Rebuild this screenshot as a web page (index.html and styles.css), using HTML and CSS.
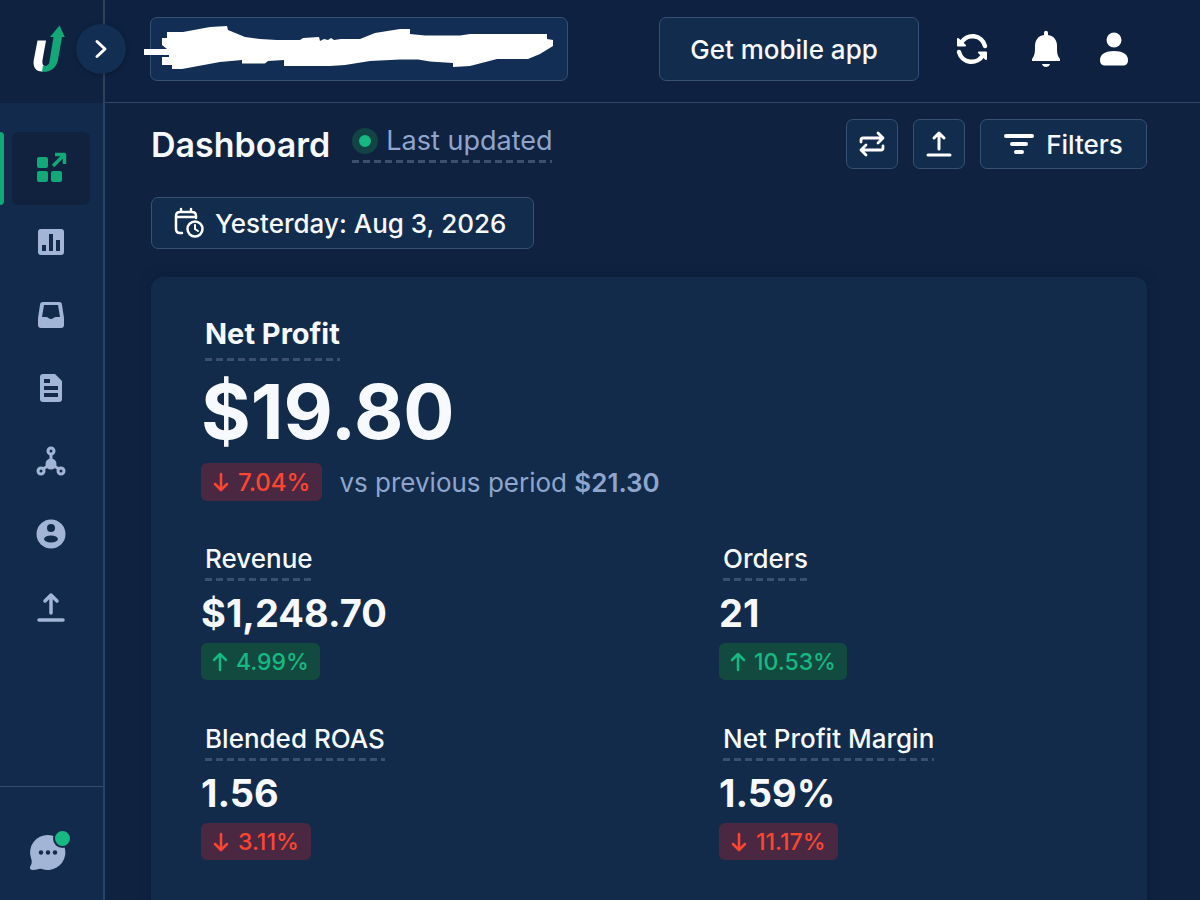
FILE: index.html
```html
<!DOCTYPE html>
<html lang="en">
<head>
    <meta charset="UTF-8">
    <meta name="viewport" content="width=device-width, initial-scale=1.0">
    <title>Dashboard</title>
    <link rel="stylesheet" href="styles.css">
</head>
<body>

<div class="app">
    <aside class="sidebar">
        <div class="brand">
            <a href="#" class="logo" aria-label="Home">
                <svg width="34" height="48" viewBox="32 25 34 48">
                    <path d="M37.500 40.500H46L42.500 60C42 64 43 66 46 66L43 71.500C36 72 32.500 67 33.800 60z" fill="#fff"/>
                    <path d="M53.500 37H50L59.500 25.500 64.800 37H62L58 59.500C56.500 68 50 73 42 71.300 46.500 70 48.500 67 49.500 61z" fill="#12a878"/>
                    <path d="M43 65.500c2 1 4 .5 5.500-1.500l2 4-5 3.500-3.500-.2z" fill="#12a878"/>
                </svg>
            </a>
            <button class="expand" aria-label="Expand menu">
                <svg width="14" height="20" viewBox="0 0 14 20"><path d="M3 2.500l8 7.500-8 7.500" fill="none" stroke="#fff" stroke-width="3" stroke-linecap="round" stroke-linejoin="round"/></svg>
            </button>
        </div>
        <nav class="nav">
            <a href="#" class="nav-item active" aria-label="Dashboard">
                <svg width="30" height="30" viewBox="-1 2 30 30" fill="currentColor" overflow="visible">
                    <rect x="0" y="5" width="11" height="11" rx="2"/>
                    <rect x="0" y="19" width="11" height="11" rx="2"/>
                    <rect x="14" y="19" width="11" height="11" rx="2"/>
                    <path d="M16 14L27 3M18 2.500h9.500V12" fill="none" stroke="currentColor" stroke-width="3.500" stroke-linejoin="round"/>
                </svg>
            </a>
            <a href="#" class="nav-item" aria-label="Reports">
                <svg width="30" height="30" viewBox="0 0 30 30">
                    <rect x="2" y="2" width="26" height="26" rx="3" fill="currentColor"/>
                    <path d="M8 18v6M15 7v17M22 13v11" stroke="#122b4c" stroke-width="4"/>
                </svg>
            </a>
            <a href="#" class="nav-item" aria-label="Inbox">
                <svg width="30" height="30" viewBox="0 0 30 30">
                    <path d="M7 2h16c2 0 3 1 3 3l2 13v7c0 2-1 3-3 3H5c-2 0-3-1-3-3v-7L4 5c0-2 1-3 3-3z" fill="currentColor"/>
                    <path d="M8 5h14l2 12h-4c-2 0-3 2-5 2s-3-2-5-2H6z" fill="#122b4c"/>
                </svg>
            </a>
            <a href="#" class="nav-item" aria-label="Documents">
                <svg width="30" height="30" viewBox="0 0 30 30">
                    <path d="M7 1h12l7 7v18c0 2-1 3-3 3H7c-2 0-3-1-3-3V4c0-2 1-3 3-3z" fill="currentColor"/>
                    <path d="M8 8h6M8 15h14M8 22h14" stroke="#122b4c" stroke-width="4"/>
                </svg>
            </a>
            <a href="#" class="nav-item" aria-label="Attribution">
                <svg width="30" height="30" viewBox="0 0 30 30" fill="none" stroke="currentColor" stroke-width="3">
                    <circle cx="15" cy="5" r="3"/>
                    <circle cx="5" cy="25" r="3"/>
                    <circle cx="25" cy="25" r="3"/>
                    <path d="M15 8v9M7 23l8-5 8 5"/>
                    <circle cx="15" cy="18" r="5.500" fill="currentColor" stroke="none"/>
                </svg>
            </a>
            <a href="#" class="nav-item" aria-label="Customers">
                <svg width="30" height="30" viewBox="0 0 30 30">
                    <circle cx="15" cy="15" r="14.500" fill="currentColor"/>
                    <circle cx="15" cy="9" r="4" fill="#122b4c"/>
                    <ellipse cx="15" cy="20" rx="7" ry="3.500" fill="#122b4c"/>
                </svg>
            </a>
            <a href="#" class="nav-item" aria-label="Export">
                <svg width="30" height="30" viewBox="0 0 30 30" fill="none" stroke="currentColor" stroke-width="3.500" stroke-linecap="round" stroke-linejoin="round">
                    <path d="M15 21V3M9 9l6-6 6 6M3 28h24"/>
                </svg>
            </a>
        </nav>
        <div class="sidebar-footer">
            <button class="chat" aria-label="Open chat">
                <svg width="44" height="44" viewBox="29 828 44 44">
                    <path d="M48 835a17.500 17.500 0 1 1-6 34c-3-1-5 1-9 1-3 0-4-2-2-5 1-2 1-4 0-7a17.500 17.500 0 0 1 17-23z" fill="#a3b5d6"/>
                    <circle cx="41" cy="852.500" r="2.200" fill="#122b4c"/>
                    <circle cx="48" cy="852.500" r="2.200" fill="#122b4c"/>
                    <circle cx="55" cy="852.500" r="2.200" fill="#122b4c"/>
                    <circle cx="62.500" cy="838.500" r="8.500" fill="#16b981" stroke="#122b4c" stroke-width="2"/>
                </svg>
            </button>
        </div>
    </aside>

    <div class="page">
        <header class="topbar">
            <div class="search">
                <input type="text" class="search-input" aria-label="Store">
                <svg class="scribble" width="424" height="64" viewBox="144 17 424 64">
                    <path fill="#fff" d="M144 49H167L162 45V38H167V32H183L210 27 227 26 228 30 245 37 260 39 277 40H300L303 38 319 37 320 41 324 39 328 40 331 38 334 40 341 39H360L375 33 400 29H410V34L425 35.500H460L470 34H547V39L553 40V46L540 54 528 59H497L470 66 453 67V63L430 61.500 418 59.500H400L370 61 345 65 330 66H284V60L268 61 265 63.500H242V60L220 62 182 69H172V65H162V57H169V55H144z"/>
                </svg>
            </div>
            <button class="button mobile-app">Get mobile app</button>
            <div class="tools">
                <button class="tool" aria-label="Refresh">
                    <svg width="34" height="36" viewBox="0 0 34 36" fill="none" stroke="#fff" stroke-width="4.500">
                        <path d="M6 12A13 13 0 0 1 30 15M28 24A13 13 0 0 1 4 21" stroke-linecap="round"/>
                        <path d="M3 8v6.500h7zM31 28v-6.500h-7z" fill="#fff" stroke-width="2" stroke-linejoin="round"/>
                    </svg>
                </button>
                <button class="tool" aria-label="Notifications">
                    <svg width="34" height="38" viewBox="-3 0 34 38" fill="#fff">
                        <path d="M15 3c0-3 4-3 4 0v2c6 1 9 5 9 11 0 6 0 9 3 13v2H3v-2c3-4 3-7 3-13 0-6 3-10 9-11z"/>
                        <path d="M13 34h8c-1 4-7 4-8 0z"/>
                    </svg>
                </button>
                <button class="tool" aria-label="Account">
                    <svg width="34" height="36" viewBox="0 0 34 36" fill="#fff">
                        <circle cx="17" cy="9" r="7.500"/>
                        <path d="M17 20c8 0 14 3 14 9 0 4-2 5.500-5 5.500H8c-3 0-5-1.500-5-5.500 0-6 6-9 14-9z"/>
                    </svg>
                </button>
            </div>
        </header>

        <main class="content">
            <div class="title-row">
                <h1>Dashboard</h1>
                <span class="updated dashed"><span class="dot"></span>Last updated</span>
                <div class="actions">
                    <button class="button icon-button" aria-label="Compare">
                        <svg width="28" height="28" viewBox="0 0 28 28" fill="none" stroke="#fff" stroke-width="2.800" stroke-linecap="round" stroke-linejoin="round">
                            <path d="M3 12V10q0-2 2-2H25M20 3l5 5-5 5M25 16v2q0 2-2 2H3M8 15l-5 5 5 5"/>
                        </svg>
                    </button>
                    <button class="button icon-button" aria-label="Share">
                        <svg width="28" height="28" viewBox="0 0 28 28" fill="none" stroke="#fff" stroke-width="3" stroke-linecap="round" stroke-linejoin="round">
                            <path d="M14 19V3M9 8l5-5 5 5M3 25h22"/>
                        </svg>
                    </button>
                    <button class="button filters">
                        <svg width="30" height="22" viewBox="0 0 30 22" fill="none" stroke="#fff" stroke-width="4" stroke-linecap="round">
                            <path d="M2 3h26M8 11h14M12 19h6"/>
                        </svg>
                        Filters
                    </button>
                </div>
            </div>

            <button class="button date">
                <svg width="30" height="32" viewBox="0 0 30 32" fill="none" stroke="#fff" stroke-width="2.500" stroke-linecap="round">
                    <path d="M8 26H6q-4 0-4-4V9q0-4 4-4h12q4 0 4 4v2M2 10h20M7 2v3M17 2v3"/>
                    <circle cx="21" cy="22" r="7.500"/>
                    <path d="M21 18v4l3 2" stroke-width="2"/>
                </svg>
                Yesterday: Aug 3, 2026
            </button>

            <section class="card">
                <h2 class="dashed">Net Profit</h2>
                <div class="hero">$19.80</div>
                <div class="compare">
                    <span class="badge big down"><svg width="16" height="20" viewBox="0 0 16 20"><path d="M8 2v16M2 12l6 6 6-6"/></svg>7.04%</span>
                    <span class="previous">vs previous period <b>$21.30</b></span>
                </div>
                <div class="metrics">
                    <div class="metric">
                        <h3 class="dashed">Revenue</h3>
                        <div class="value">$1,248.70</div>
                        <span class="badge up"><svg width="16" height="20" viewBox="0 0 16 20"><path d="M8 18V2M2 8l6-6 6 6"/></svg>4.99%</span>
                    </div>
                    <div class="metric">
                        <h3 class="dashed">Orders</h3>
                        <div class="value">21</div>
                        <span class="badge up"><svg width="16" height="20" viewBox="0 0 16 20"><path d="M8 18V2M2 8l6-6 6 6"/></svg>10.53%</span>
                    </div>
                    <div class="metric">
                        <h3 class="dashed">Blended ROAS</h3>
                        <div class="value">1.56</div>
                        <span class="badge down"><svg width="16" height="20" viewBox="0 0 16 20"><path d="M8 2v16M2 12l6 6 6-6"/></svg>3.11%</span>
                    </div>
                    <div class="metric">
                        <h3 class="dashed">Net Profit Margin</h3>
                        <div class="value">1.59%</div>
                        <span class="badge down"><svg width="16" height="20" viewBox="0 0 16 20"><path d="M8 2v16M2 12l6 6 6-6"/></svg>11.17%</span>
                    </div>
                </div>
            </section>
        </main>
    </div>
</div>

</body>
</html>
```
FILE: styles.css
```css
* {
    box-sizing: border-box;
}
body {
    margin: 0;
    font-family: Inter, "Liberation Sans", sans-serif;
    background: #0f2341;
    color: #f6f9ff;
}
h1, h2, h3 {
    margin: 0;
}
svg {
    display: block;
    flex-shrink: 0;
}
button {
    font-family: inherit;
    color: inherit;
    cursor: pointer;
}
.app {
    display: flex;
    height: 100vh;
}

/* Sidebar */
.sidebar {
    display: flex;
    flex-direction: column;
    width: 105px;
    flex-shrink: 0;
    background: #122b4c;
    border-right: 2px solid #2b4262;
}
.brand {
    position: relative;
    height: 103px;
    padding: 25px 32px;
    background: #0f2340;
}
.logo {
    display: block;
    width: 34px;
}
.expand {
    position: absolute;
    top: 24px;
    right: -23px;
    z-index: 1;
    display: flex;
    align-items: center;
    justify-content: center;
    width: 50px;
    height: 50px;
    padding: 0;
    border: none;
    border-radius: 50%;
    background: #132e53;
    box-shadow: 0 1px 4px rgba(0,0,0,0.3);
}
.nav {
    display: flex;
    flex-direction: column;
    flex: 1;
    padding-top: 29px;
}
.nav-item {
    position: relative;
    display: flex;
    align-items: center;
    justify-content: center;
    height: 73px;
    margin: 0 13px 0 12px;
    border-radius: 6px;
    color: #a3b5d6;
}
.nav-item.active {
    background: #10223e;
    color: #12a878;
}
.nav-item.active::before {
    content: "";
    position: absolute;
    top: 0;
    left: -12px;
    width: 4px;
    height: 100%;
    border-radius: 0 4px 4px 0;
    background: #12a878;
}
.sidebar-footer {
    height: 114px;
    padding: 41px 29px 0;
    border-top: 1px solid #344b6c;
}
.chat {
    padding: 0;
    border: none;
    background: none;
}

/* Top bar */
.page {
    display: flex;
    flex-direction: column;
    flex: 1;
    min-width: 0;
}
.topbar {
    display: flex;
    align-items: center;
    height: 103px;
    flex-shrink: 0;
    padding: 0 69px 4px 45px;
    background: #0e2140;
    border-bottom: 1px solid #30476a;
}
.search {
    position: relative;
    flex: 0 1 418px;
}
.search-input {
    width: 100%;
    height: 64px;
    padding: 0 16px;
    display: block;
    border: 1px solid #375172;
    border-radius: 7px;
    background: #132e54;
    color: #fff;
    font: 500 26px Inter, sans-serif;
}
.scribble {
    position: absolute;
    top: 0;
    left: -6px;
}
.button {
    display: flex;
    align-items: center;
    justify-content: center;
    padding: 0;
    border: 1px solid #375172;
    border-radius: 7px;
    background: #122c4e;
    font-size: 26px;
    font-weight: 500;
    white-space: nowrap;
}
.mobile-app {
    width: 260px;
    height: 64px;
    margin-left: auto;
    padding-right: 10px;
}
.tools {
    display: flex;
    gap: 37px;
    margin-left: 36px;
}
.tool {
    display: flex;
    align-items: center;
    padding: 0;
    border: none;
    background: none;
}

/* Content */
.content {
    flex: 1;
    min-height: 0;
    padding: 16px 53px 28px 46px;
    overflow-y: auto;
    scrollbar-width: none;
}
.title-row {
    display: flex;
    align-items: center;
    height: 50px;
}
h1 {
    font-size: 34px;
    font-weight: 600;
}
.dashed {
    padding-bottom: 6px;
    background: repeating-linear-gradient(to right, #3b506f 0 7px, transparent 7px 11px) bottom left / 100% 3px no-repeat;
}
.updated {
    display: flex;
    align-items: center;
    gap: 8px;
    margin-left: 22px;
    font-size: 27px;
    line-height: 32px;
    color: #8fa5cc;
}
.dot {
    width: 26px;
    height: 26px;
    border: 7px solid #124345;
    border-radius: 50%;
    background: #16b981;
}
.actions {
    display: flex;
    gap: 15px;
    margin-left: auto;
}
.icon-button {
    width: 52px;
    height: 50px;
}
.filters {
    gap: 12px;
    width: 167px;
    height: 50px;
}
.date {
    gap: 11px;
    height: 52px;
    margin: 28px 0;
    padding: 0 27px 0 22px;
}
.card {
    padding: 39px 50px 60px;
    border-radius: 12px;
    background: #122b4b;
    box-shadow: 0 0 12px rgba(5,15,35,0.35);
}
.card .dashed {
    width: fit-content;
    margin-left: 4px;
}
h2 {
    font-size: 29px;
    font-weight: 700;
    line-height: 36px;
}
.card h2 {
    padding-bottom: 9px;
}
.hero {
    margin: 12px 0 14px;
    font-size: 76px;
    font-weight: 700;
    line-height: 76px;
}
.compare {
    display: flex;
    align-items: center;
    gap: 17px;
    margin-bottom: 42px;
}
.previous {
    font-size: 26px;
    color: #8fa5cc;
}
.previous b {
    font-weight: 600;
}
.metrics {
    display: grid;
    grid-template-columns: 1fr 1fr;
    gap: 43px 140px;
}
h3 {
    font-size: 26px;
    font-weight: 500;
    line-height: 32px;
    white-space: nowrap;
}
.value {
    margin: 10px 0 8px;
    font-size: 38px;
    font-weight: 700;
    line-height: 44px;
}
.badge {
    display: flex;
    align-items: center;
    gap: 8px;
    width: fit-content;
    height: 37px;
    padding: 0 11px;
    border-radius: 6px;
    font-size: 23px;
    font-weight: 500;
}
.badge.down {
    gap: 9px;
    padding: 0 12px;
}
.badge.big {
    height: 38px;
    font-size: 24px;
}
.badge path {
    fill: none;
    stroke: currentColor;
    stroke-width: 2.5;
    stroke-linecap: round;
    stroke-linejoin: round;
}
.down {
    background: #4a2841;
    color: #ff4530;
}
.up {
    background: #124a40;
    color: #16b981;
}
```
